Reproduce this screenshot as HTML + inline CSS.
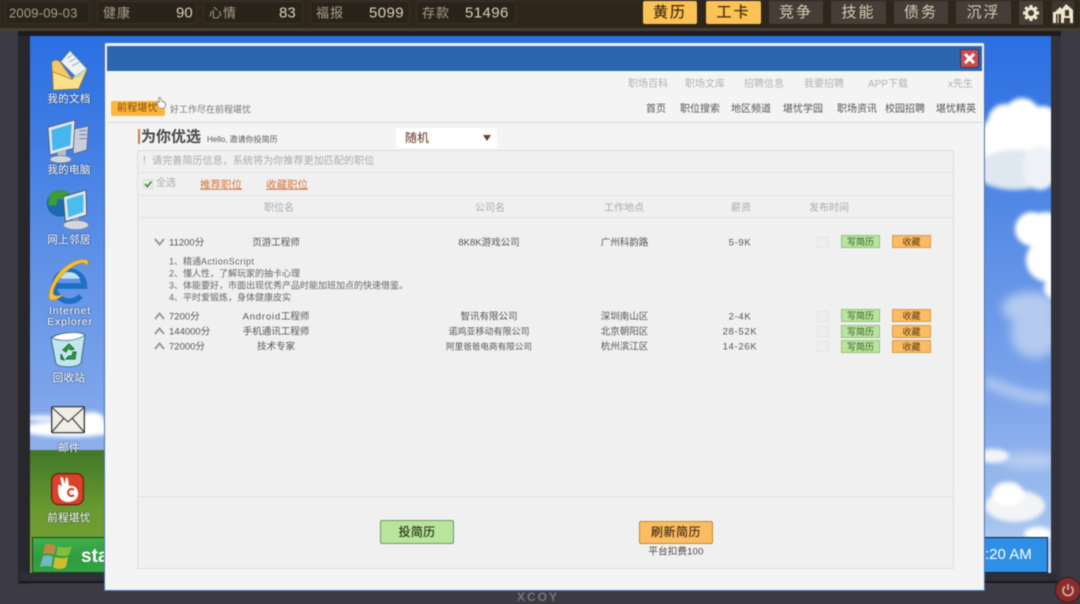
<!DOCTYPE html>
<html lang="zh"><head><meta charset="utf-8"><title>前程堪忧</title>
<style>
html,body{margin:0;padding:0;background:#3b3a45}
#r{position:relative;width:1080px;height:604px;overflow:hidden;background:#3b3a45;font-family:"Liberation Sans","WenQuanYi Zen Hei","Noto Sans CJK SC",sans-serif;filter:blur(.4px)}
.a{position:absolute}
.t{position:absolute;white-space:nowrap;line-height:1;transform:translateY(-50%);margin-top:1px}
.c{transform:translate(-50%,-50%)}
.stat{position:absolute;top:1px;height:23px;background:#2a2319;border:1px solid #3a3226;border-radius:3px;box-sizing:border-box}
.tb{position:absolute;top:1px;height:23px;background:#453d36;color:#d8cfb8;font-size:15px;text-align:center;line-height:23px;letter-spacing:2px;box-sizing:border-box}
.tb.on{background:#fbc255;color:#4a2a10;border-radius:2px;text-shadow:0 0 .5px #4a2a10}
.lab{position:absolute;left:69px;transform:translate(-50%,-50%);margin-top:1px;color:#fff;font-size:10.5px;line-height:1;white-space:nowrap;text-shadow:0 0 2px #234;letter-spacing:.4px}
.n1{color:#b2b2b2;font-size:10px;margin-top:2px}
.n2{color:#555;font-size:10px;margin-top:2px}
.h{color:#aaa;font-size:10px;margin-top:2px}
.d{color:#666;font-size:9px}
.m{color:#555;font-size:9.5px}
.s{letter-spacing:.7px}
.line{position:absolute;left:138px;width:815px;height:1px;background:#e0e0e0}
.cb{position:absolute;left:817px;width:12px;height:11px;background:#eeeeee;border:1px solid #e4e4e4;box-sizing:border-box}
.g{position:absolute;left:841px;width:39px;height:13px;background:#b7e59b;border:1px solid #92c47a;box-sizing:border-box;color:#3f5a30;font-size:9px;text-align:center;line-height:12px}
.o{position:absolute;left:892px;width:39px;height:13px;background:#fcbc62;border:1px solid #d99a45;box-sizing:border-box;color:#5a3a10;font-size:9px;text-align:center;line-height:12px}
</style></head><body><div id="r">

<!-- top bar -->
<div class="a" style="left:0;top:0;width:1080px;height:28px;background:#2e261b"></div>
<div class="a" style="left:0;top:28px;width:1080px;height:3px;background:#453f33"></div>
<div class="stat" style="left:5px;width:85px"></div>
<div class="stat" style="left:97px;width:100px"></div>
<div class="stat" style="left:203px;width:100px"></div>
<div class="stat" style="left:310px;width:100px"></div>
<div class="stat" style="left:416px;width:100px"></div>
<div class="t" style="left:9px;top:12px;color:#a89f8a;font-size:13px;letter-spacing:.2px">2009-09-03</div>
<div class="t" style="left:103px;top:12px;color:#a89f8a;font-size:13px;letter-spacing:1px">健康</div>
<div class="t" style="left:176px;top:12px;color:#d8d0b8;font-size:15px">90</div>
<div class="t" style="left:209px;top:12px;color:#a89f8a;font-size:13px;letter-spacing:1px">心情</div>
<div class="t" style="left:279px;top:12px;color:#d8d0b8;font-size:15px">83</div>
<div class="t" style="left:316px;top:12px;color:#a89f8a;font-size:13px;letter-spacing:1px">福报</div>
<div class="t" style="left:369px;top:12px;color:#d8d0b8;font-size:15px;letter-spacing:.4px">5099</div>
<div class="t" style="left:422px;top:12px;color:#a89f8a;font-size:13px;letter-spacing:1px">存款</div>
<div class="t" style="left:465px;top:12px;color:#d8d0b8;font-size:15px;letter-spacing:.4px">51496</div>
<div class="tb on" style="left:643px;width:54px">黄历</div>
<div class="tb on" style="left:706px;width:55px">工卡</div>
<div class="tb" style="left:769px;width:54px">竞争</div>
<div class="tb" style="left:831px;width:55px">技能</div>
<div class="tb" style="left:894px;width:54px">债务</div>
<div class="tb" style="left:956px;width:55px">沉浮</div>
<div class="a" style="left:1019px;top:1px;width:24px;height:24px;background:#453d36"></div>
<svg class="a" style="left:1019px;top:1px" width="24" height="24" viewBox="0 0 24 24"><g fill="#efe6cd"><circle cx="12" cy="12" r="6"/><g stroke="#efe6cd" stroke-width="3.2"><path d="M12 4V20M4 12H20M6.300 6.300L17.700 17.700M17.700 6.300L6.300 17.700"/></g></g><circle cx="12" cy="12" r="3" fill="#453d36"/></svg>
<div class="a" style="left:1052px;top:1px;width:22px;height:24px;background:#3f372f"></div>
<svg class="a" style="left:1052px;top:1px" width="22" height="24" viewBox="0 0 22 24"><path d="M1 22V11H3L8 6L10 8L14 3L21 9V22Z" fill="#efe6cd"/><path d="M4 13h5v9H4zM13 9h4v6h-4zM12 17h6v5h-6z" fill="#3d342b"/><path d="M6 13v9" stroke="#efe6cd"/></svg>

<!-- frame -->
<div class="a" style="left:18px;top:31px;width:12px;height:553px;background:#27272d"></div>
<div class="a" style="left:1051px;top:31px;width:10px;height:553px;background:#33333b"></div>
<div class="a" style="left:18px;top:31px;width:1043px;height:5px;background:#1c1b20"></div>
<div class="a" style="left:20px;top:573px;width:1037px;height:10px;background:#2e2e36"></div>
<div class="a" style="left:20px;top:581px;width:1037px;height:2px;background:#18181c"></div>

<!-- wallpaper -->
<div class="a" style="left:30px;top:36px;width:1021px;height:537px;overflow:hidden;background:linear-gradient(#2b6fe3 0,#3f7de4 100px,#5a8ee6 200px,#7ba3ea 350px,#a0bfee 480px,#c8d8f0 537px)">
  <svg class="a" style="left:0;top:0" width="1021" height="537" viewBox="0 0 1021 537">
    <defs><filter id="b" x="-20%" y="-20%" width="140%" height="140%"><feGaussianBlur stdDeviation="2"/></filter><filter id="b2" x="-20%" y="-20%" width="140%" height="140%"><feGaussianBlur stdDeviation="5"/></filter></defs>
    <g filter="url(#b2)">
      <circle cx="1005" cy="298" r="24" fill="#b4caf0"/>
      <ellipse cx="1000" cy="272" rx="28" ry="16" fill="#b4caf0"/>
      <path d="M955 345C985 358 1000 362 1021 362" stroke="#c5d6f2" stroke-width="8" fill="none"/>
      <ellipse cx="1000" cy="425" rx="30" ry="8" fill="#bacdf0"/>
    </g>
    <g filter="url(#b)">
      <ellipse cx="990" cy="108" rx="42" ry="38" fill="#fff"/>
      <circle cx="975" cy="85" r="17" fill="#fff"/>
      <circle cx="992" cy="80" r="18" fill="#fff"/>
      <circle cx="1012" cy="90" r="20" fill="#fff"/>
      <ellipse cx="985" cy="134" rx="40" ry="20" fill="#dfe7f0"/>
      <ellipse cx="1010" cy="132" rx="18" ry="22" fill="#eef2f6"/>
      <circle cx="1002" cy="193" r="17" fill="#fff"/>
      <circle cx="1016" cy="195" r="19" fill="#fff"/>
      <circle cx="1018" cy="224" r="22" fill="#fff"/>
      <circle cx="1025" cy="252" r="11" fill="#fff"/>
      <ellipse cx="963" cy="420" rx="16" ry="7" fill="#f2f5f8"/>
      <ellipse cx="985" cy="470" rx="30" ry="16" fill="#f2f4f6"/>
      <ellipse cx="978" cy="458" rx="16" ry="12" fill="#fff"/>
      <ellipse cx="1008" cy="498" rx="14" ry="7" fill="#fff"/>
      <ellipse cx="12" cy="382" rx="18" ry="2.500" fill="#fff"/>
      <ellipse cx="40" cy="393" rx="50" ry="8" fill="#fff"/>
      <ellipse cx="62" cy="385" rx="13" ry="9" fill="#fff"/>
    </g>
  </svg>
  <div class="a" style="left:0;top:414px;width:76px;height:123px;background:linear-gradient(#44782a 0,#4a7f2a 14px,#6a9a30 60px,#7da03a 100%)"></div>
</div>

<!-- desktop icons: drawn in 3x zoom coordinates -->
<svg class="a" style="left:30px;top:40px" width="75" height="130" viewBox="0 0 225 390">
  <path d="M92 65L120 32L172 88L135 108Z" fill="#eef3f4" stroke="#5d7f90" stroke-width="2"/>
  <path d="M112 55L130 42M118 66L142 52M126 78L152 64" stroke="#8fb8c0" stroke-width="3"/>
  <path d="M65 68C72 58 85 58 92 68L125 115L172 85L145 145L70 150Z" fill="#f0c868" stroke="#9a7a28" stroke-width="2"/>
  <path d="M68 95L125 118L172 85L146 146L70 150Z" fill="#fbe08e" stroke="#9a7a28" stroke-width="2"/>
  <path d="M128 112L170 86L150 112Z" fill="#bcdcb8"/>
  <path d="M130 268L175 258L170 330L130 342Z" fill="#c8cfdc" stroke="#55607a" stroke-width="2"/>
  <path d="M148 272H170M148 284H170M148 296H170" stroke="#77839c" stroke-width="3"/>
  <path d="M54 262L135 240L130 325L60 345Z" fill="#dfe6ee" stroke="#4a5a78" stroke-width="2.500"/>
  <path d="M64 270L125 252L121 316L68 332Z" fill="#45b6ee"/>
  <path d="M82 335L108 328V350L84 355Z" fill="#b6bdca"/>
  <ellipse cx="92" cy="358" rx="32" ry="11" fill="#d2d6df" stroke="#6a7288" stroke-width="2"/>
</svg>
<div class="lab" style="top:98px">我的文档</div>
<div class="lab" style="top:169px">我的电脑</div>
<svg class="a" style="left:30px;top:180px" width="75" height="130" viewBox="0 0 225 390">
  <circle cx="90" cy="70" r="40" fill="#1c6ab0"/>
  <path d="M58 45C72 28 100 28 118 38L100 60L85 55L78 78L55 75Z" fill="#3d9b38"/>
  <path d="M100 50L168 30L170 105L106 125Z" fill="#dfe6ee" stroke="#3a5068" stroke-width="2.500"/>
  <path d="M110 58L160 42L160 96L115 112Z" fill="#4bbcec"/>
  <path d="M128 118L146 112V128L130 132Z" fill="#9aa6b8"/>
  <ellipse cx="138" cy="135" rx="38" ry="14" fill="#d2d6df" stroke="#6a7288" stroke-width="2"/>
  <path d="M75 318H163A45 45 0 1 0 152 348" fill="none" stroke="#1f6fc4" stroke-width="17"/>
  <path d="M88 292A36 36 0 0 1 150 296H90Z" fill="#bfe3f7"/>
  <path d="M172 240C150 232 100 250 72 300C56 330 52 355 62 360C72 365 92 352 104 342C88 348 72 350 70 340C68 315 110 262 150 250C160 247 168 250 170 258C175 250 176 244 172 240Z" fill="#f2bf3c" stroke="#a87a18" stroke-width="1.500"/>
</svg>
<div class="lab" style="top:239px">网上邻居</div>
<div class="lab" style="top:309.500px;left:70px;font-size:10.500px;letter-spacing:.8px">Internet</div>
<div class="lab" style="top:320.500px;left:70px;font-size:10.500px;letter-spacing:.8px">Explorer</div>
<svg class="a" style="left:49px;top:330px" width="38" height="39" viewBox="0 0 38 39">
  <path d="M2 8C10 2 30 1 36 5L32 33C28 38 12 38 7 34Z" fill="#c2e5ef" stroke="#3a6e80" stroke-width="1"/>
  <path d="M3 8C12 12 28 11 36 5C30 1 10 2 3 8Z" fill="#fff" stroke="#3a6e80" stroke-width=".7"/>
  <path d="M14 20L20 14L25 19L22 20L19 18L17 22ZM27 22L26 29H17L20 26H23L24 22ZM12 24L15 30L12 29Z" fill="#2da243" stroke="#186a28" stroke-width="1"/>
</svg>
<div class="lab" style="top:377px">回收站</div>
<svg class="a" style="left:51px;top:406px" width="34" height="28" viewBox="0 0 34 28">
  <rect x=".7" y=".7" width="32.600" height="26" rx="1" fill="#efede6" stroke="#2a2a2a" stroke-width="1.200"/>
  <path d="M1 1.500L17 16L33 1.500M1 26L13 12M33 26L21 12" fill="none" stroke="#2a2a2a" stroke-width="1"/>
</svg>
<div class="lab" style="top:447px">邮件</div>
<svg class="a" style="left:51px;top:473px" width="33" height="33" viewBox="0 0 33 33">
  <rect x=".6" y=".6" width="31.800" height="31" rx="7" fill="#d8432a" stroke="#6a1d10" stroke-width="1.200"/>
  <path d="M7 14C7 22 8 28 16 29C24 29 28 25 27 19C26 14 22 12 18 13L17 6C16.500 4 14.500 4 14.500 6L14 11L12 5C11 3.500 9 4 9.500 6L11 14L9 12C8 11 7 12 7 14Z" fill="#fff"/>
  <path d="M23 17A3.500 3.500 0 1 0 23 22" fill="none" stroke="#d8432a" stroke-width="2.200"/>
</svg>
<div class="lab" style="top:517px">前程堪忧</div>

<!-- taskbar -->
<div class="a" style="left:32px;top:537px;width:72px;height:36px;background:linear-gradient(#3fae4c,#2f9c3f 60%,#36a345);border:1px solid #1a4020;border-right:0;box-sizing:border-box"></div>
<svg class="a" style="left:39px;top:542px" width="34" height="30" viewBox="0 0 34 30" opacity=".85">
  <path d="M6 3C10 1 13 2 17 4L15 13C11 11 8 11 4 12Z" fill="#d9853f"/>
  <path d="M19 4C23 6 27 6 33 4L30 13C25 15 21 14 17 13Z" fill="#8ec63f"/>
  <path d="M4 14C8 13 11 13 14 15L12 25C8 23 5 24 1 25Z" fill="#7fc0d8"/>
  <path d="M16 15C20 16 24 17 29 15L27 25C22 28 17 27 14 25Z" fill="#e8c52e"/>
</svg>
<div class="t" style="left:81px;top:556px;color:#fff;font-size:19px;font-weight:bold;width:23px;overflow:hidden;height:24px;line-height:24px">start</div>
<div class="a" style="left:985px;top:537px;width:63px;height:36px;background:#2f8fe6;border:1px solid #123;border-left:0;box-sizing:border-box"></div>
<div class="t" style="left:985px;top:554px;color:#fff;font-size:15px;width:47px;overflow:hidden;height:18px;line-height:18px">:20 AM</div>
<div class="a" style="left:104px;top:43px;width:881px;height:548px;background:#f4f4f5;border:1px solid #4a72b0;border-top:2px solid #e8f0fa;border-radius:3px 3px 0 0;box-sizing:border-box"></div>

<!-- power -->
<div class="a" style="left:1055px;top:577px;width:26px;height:26px;border-radius:50%;background:#8a2c2c;border:1px solid #3a1a1a;box-sizing:border-box"></div>
<svg class="a" style="left:1061px;top:583px" width="14" height="14" viewBox="0 0 14 14"><path d="M4 3.500A5 5 0 1 0 10 3.500" fill="none" stroke="#d8a8a0" stroke-width="1.800"/><path d="M7 1V7" stroke="#d8a8a0" stroke-width="1.800"/></svg>
<div class="t c" style="left:538px;top:596px;color:#777;font-size:12px;font-weight:bold;letter-spacing:2px">XCOY</div>

<!-- dialog -->
<div class="a" style="left:107px;top:46px;width:875px;height:25px;background:#2c66ae"></div>
<div class="a" style="left:960px;top:49px;width:19px;height:19px;background:#cf4a50;border:1px solid #2a3a60;border-radius:2px;box-sizing:border-box"></div>
<svg class="a" style="left:960px;top:49px" width="19" height="19" viewBox="0 0 19 19"><path d="M5 5L14 14M14 5L5 14" stroke="#fff" stroke-width="3"/></svg>

<div class="t n1" style="left:628px;top:83px">职场百科</div>
<div class="t n1" style="left:685px;top:83px">职场文库</div>
<div class="t n1" style="left:744px;top:83px">招聘信息</div>
<div class="t n1" style="left:804px;top:83px">我要招聘</div>
<div class="t n1" style="left:868px;top:83px">APP下载</div>
<div class="t n1" style="left:948px;top:83px">x先生</div>
<div class="t n2" style="left:646px;top:108px">首页</div>
<div class="t n2" style="left:680px;top:108px">职位搜索</div>
<div class="t n2" style="left:731px;top:108px">地区频道</div>
<div class="t n2" style="left:783px;top:108px">堪忧学园</div>
<div class="t n2" style="left:837px;top:108px">职场资讯</div>
<div class="t n2" style="left:885px;top:108px">校园招聘</div>
<div class="t n2" style="left:936px;top:108px">堪忧精英</div>

<div class="a" style="left:111px;top:101px;width:54px;height:15px;background:#fdb63c;border-radius:2px"></div>
<div class="t" style="left:117px;top:108px;color:#7a4a10;font-size:10px;letter-spacing:.2px">前程堪忧</div>
<svg class="a" style="left:155px;top:96px" width="12" height="14" viewBox="0 0 12 14"><path d="M2 6L3 11C5 13 9 13 10.500 10C11 7 9 5 7 5.500L5 1.500L3.500 2L4.500 6Z" fill="#fff" stroke="#8a7a60" stroke-width=".8"/></svg>
<div class="t" style="left:170px;top:109px;color:#777;font-size:9px">好工作尽在前程堪忧</div>
<div class="a" style="left:107px;top:122px;width:875px;height:1px;background:#d9d9d9"></div>

<div class="a" style="left:138px;top:129px;width:2px;height:15px;background:#d07a40"></div>
<div class="t" style="left:141px;top:136px;color:#484848;font-size:15px;font-weight:bold">为你优选</div>
<div class="t" style="left:207px;top:139px;color:#555;font-size:8px">Hello, 邀请你投简历</div>
<div class="a" style="left:396px;top:128px;width:101px;height:20px;background:#fff"></div>
<div class="t" style="left:405px;top:137px;color:#5a3020;font-size:12px">随机</div>
<svg class="a" style="left:483px;top:134px" width="8" height="8" viewBox="0 0 8 8"><path d="M0 1H8L4 7Z" fill="#6a4028"/></svg>

<!-- panel -->
<div class="a" style="left:137px;top:150px;width:817px;height:419px;background:#f0f0f1;border:1px solid #dedede;box-sizing:border-box"></div>
<div class="line" style="top:172px"></div>
<div class="line" style="top:195px"></div>
<div class="line" style="top:217px"></div>
<div class="line" style="top:496px"></div>
<div class="t" style="left:142px;top:161px;color:#aaa;font-size:10px;letter-spacing:.1px">！请完善简历信息，系统将为你推荐更加匹配的职位</div>
<div class="a" style="left:143px;top:179px;width:10px;height:10px;background:#e4f0e0;border:1px solid #d8e0d6;box-sizing:border-box"></div>
<svg class="a" style="left:143px;top:179px" width="10" height="10" viewBox="0 0 10 10"><path d="M2 5L4.300 7.500L8.500 2.500" fill="none" stroke="#3a8a30" stroke-width="1.600"/></svg>
<div class="t" style="left:156px;top:183px;color:#aaa;font-size:10px">全选</div>
<div class="t" style="left:200px;top:184px;color:#d4763a;font-size:10.500px;text-decoration:underline">推荐职位</div>
<div class="t" style="left:266px;top:184px;color:#d4763a;font-size:10.500px;text-decoration:underline">收藏职位</div>
<div class="t h c" style="left:279px;top:207px">职位名</div>
<div class="t h c" style="left:490px;top:207px">公司名</div>
<div class="t h c" style="left:624px;top:207px">工作地点</div>
<div class="t h c" style="left:741px;top:207px">薪资</div>
<div class="t h c" style="left:829px;top:207px">发布时间</div>

<!-- row 1 -->
<svg class="a" style="left:154px;top:238px" width="11" height="8" viewBox="0 0 11 8"><path d="M1 1L5.500 6.500L10 1" fill="none" stroke="#999" stroke-width="2"/></svg>
<div class="t m" style="left:169px;top:242px">11200分</div>
<div class="t m c" style="left:276px;top:242px">页游工程师</div>
<div class="t m c" style="left:489px;top:242px">8K8K游戏公司</div>
<div class="t m c" style="left:624.500px;top:242px">广州科韵路</div>
<div class="t m c s" style="left:740px;top:242px">5-9K</div>
<div class="cb" style="top:237px"></div><div class="g" style="top:235px">写简历</div><div class="o" style="top:235px">收藏</div>

<div class="t d" style="left:169px;top:261px">1、精通<span style="letter-spacing:.45px">ActionScript</span></div>
<div class="t d" style="left:169px;top:273px">2、懂人性，了解玩家的抽卡心理</div>
<div class="t d" style="left:169px;top:285px">3、体能要好，市面出现优秀产品时能加班加点的快速借鉴。</div>
<div class="t d" style="left:169px;top:297px">4、平时爱锻炼，身体健康皮实</div>

<!-- row 2 -->
<svg class="a" style="left:154px;top:312px" width="11" height="8" viewBox="0 0 11 8"><path d="M1 7L5.500 1.500L10 7" fill="none" stroke="#999" stroke-width="2"/></svg>
<div class="t m" style="left:169px;top:316px">7200分</div>
<div class="t m c" style="left:276px;top:316px"><span style="letter-spacing:.8px">Android</span>工程师</div>
<div class="t m c" style="left:489px;top:316px">智讯有限公司</div>
<div class="t m c" style="left:624.500px;top:316px">深圳南山区</div>
<div class="t m c s" style="left:740px;top:316px">2-4K</div>
<div class="cb" style="top:311px"></div><div class="g" style="top:309px">写简历</div><div class="o" style="top:309px">收藏</div>

<!-- row 3 -->
<svg class="a" style="left:154px;top:327px" width="11" height="8" viewBox="0 0 11 8"><path d="M1 7L5.500 1.500L10 7" fill="none" stroke="#999" stroke-width="2"/></svg>
<div class="t m" style="left:169px;top:331px">144000分</div>
<div class="t m c" style="left:276px;top:331px">手机通讯工程师</div>
<div class="t c" style="left:489px;top:331px;color:#555;font-size:9px">诺鸡亚移动有限公司</div>
<div class="t m c" style="left:624.500px;top:331px">北京朝阳区</div>
<div class="t m c s" style="left:740px;top:331px">28-52K</div>
<div class="cb" style="top:326px"></div><div class="g" style="top:325px">写简历</div><div class="o" style="top:325px">收藏</div>

<!-- row 4 -->
<svg class="a" style="left:154px;top:342px" width="11" height="8" viewBox="0 0 11 8"><path d="M1 7L5.500 1.500L10 7" fill="none" stroke="#999" stroke-width="2"/></svg>
<div class="t m" style="left:169px;top:346px">72000分</div>
<div class="t m c" style="left:276px;top:346px">技术专家</div>
<div class="t c" style="left:489px;top:346px;color:#555;font-size:8.600px">阿里爸爸电商有限公司</div>
<div class="t m c" style="left:624.500px;top:346px">杭州滨江区</div>
<div class="t m c s" style="left:740px;top:346px">14-26K</div>
<div class="cb" style="top:341px"></div><div class="g" style="top:340px">写简历</div><div class="o" style="top:340px">收藏</div>

<!-- bottom buttons -->
<div class="a" style="left:380px;top:520px;width:74px;height:24px;background:#b9e49c;border:1px solid #6f9a60;border-radius:2px;box-sizing:border-box;color:#2a3a1a;font-size:12px;text-align:center;line-height:22px;letter-spacing:.3px;text-shadow:0 0 .5px #2a3a1a">投简历</div>
<div class="a" style="left:639px;top:521px;width:74px;height:23px;background:#fcbc62;border:1px solid #c08a3f;border-radius:2px;box-sizing:border-box;color:#4a3418;font-size:12px;text-align:center;line-height:21px;letter-spacing:.5px;text-shadow:0 0 .5px #4a3418">刷新简历</div>
<div class="t c" style="left:676px;top:551px;color:#444;font-size:9.500px;letter-spacing:.2px">平台扣费100</div>

</div></body></html>
